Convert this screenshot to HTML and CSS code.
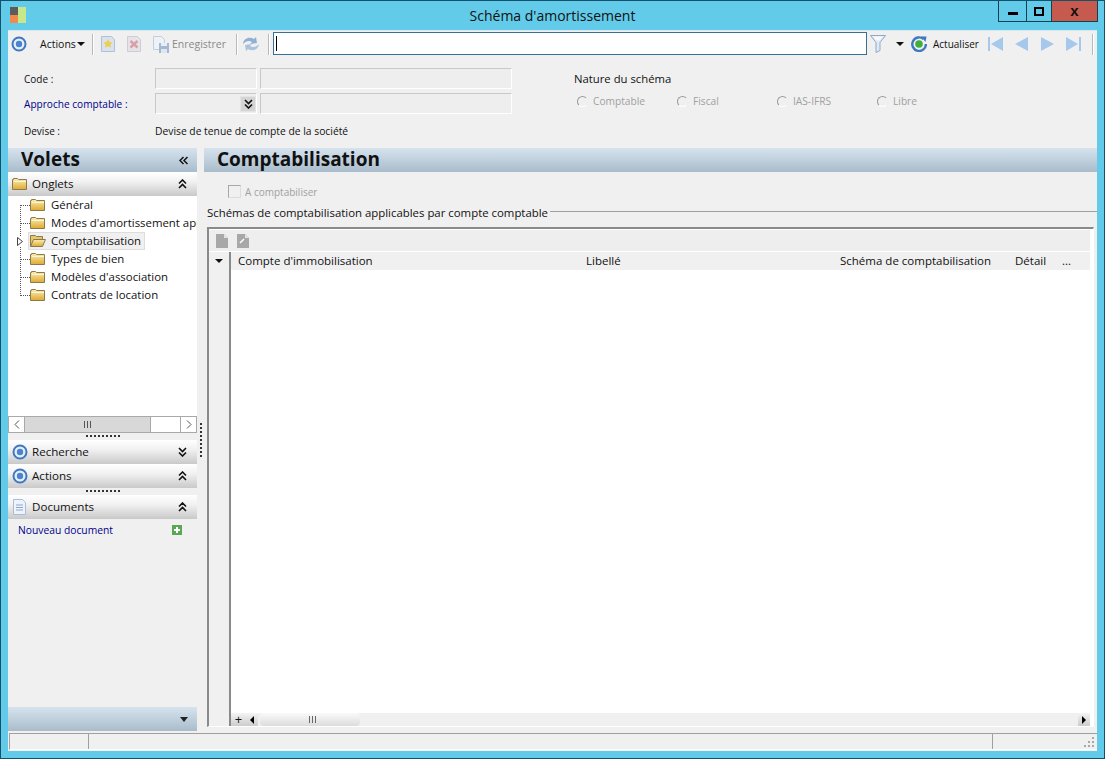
FILE: index.html
```html
<!DOCTYPE html>
<html>
<head>
    <title>Schéma d'amortissement</title>
    <link rel="stylesheet" href="styles.css">
</head>
<body>
<svg class="defs">
    <defs>
        <linearGradient id="foldergrad" x1="0" y1="0" x2="0" y2="1">
            <stop offset="0" stop-color="#fbeeb8"/>
            <stop offset="1" stop-color="#dfa92f"/>
        </linearGradient>
        <g id="target">
            <circle cx="8" cy="8" r="6.5" fill="#e6eef8" stroke="#3f78c0" stroke-width="2"/>
            <circle cx="8" cy="8" r="3.2" fill="#4a84d0"/>
        </g>
        <g id="folder">
            <path d="M1.500 3.500v-1h4l1 1h8v10h-14v-10z" fill="url(#foldergrad)" stroke="#8a7a50"/>
            <path d="M2 5h12v1h-12z" fill="#fff6d0"/>
        </g>
        <g id="folderopen">
            <path d="M0.500 13.500v-11h5l1 1h6v3" fill="#e6c76c" stroke="#8a7a50"/>
            <path d="M0.500 13.500l3-7h12l-3 7z" fill="url(#foldergrad)" stroke="#8a7a50"/>
        </g>
        <g id="chevup">
            <path d="M1 4.500l3.500-3.500 3.500 3.500M1 9l3.500-3.500 3.500 3.500" fill="none" stroke="#111" stroke-width="1.600"/>
        </g>
        <g id="chevdown">
            <path d="M1 1l3.500 3.500 3.500-3.500M1 5.500l3.500 3.500 3.500-3.500" fill="none" stroke="#111" stroke-width="1.600"/>
        </g>
    </defs>
</svg>

<div class="window">
    <div class="titlebar">
        <svg class="appicon" width="16" height="16" viewBox="0 0 16 16">
            <rect x="0" y="0" width="8" height="8" fill="#5c5c5c"/>
            <rect x="0" y="8" width="8" height="8" fill="#f08a4b"/>
            <rect x="8" y="0" width="8" height="16" fill="#c6e88a"/>
        </svg>
        <div class="title">Schéma d'amortissement</div>
        <div class="winbuttons">
            <div class="winbtn minbtn"><span class="minglyph"></span></div>
            <div class="winbtn maxbtn"><span class="maxglyph"></span></div>
            <div class="winbtn closebtn">x</div>
        </div>
    </div>

    <div class="client">
        <div class="toolbar">
            <svg class="tb-target" width="16" height="16" viewBox="0 0 16 16"><use href="#target"/></svg>
            <span class="tb-actions">Actions</span>
            <span class="caret"></span>
            <span class="sep sep-a"></span>
            <svg class="tb-new" width="14" height="16" viewBox="0 0 14 16">
                <path d="M0.500 0.500h10l3 3v12h-13z" fill="#d8e2f0" stroke="#b3bfd0"/>
                <path d="M7 3l1.500 3 3.200.4-2.300 2.200.6 3.200-3-1.500-3 1.500.6-3.200-2.300-2.200 3.200-.4z" fill="#ecd04a"/>
            </svg>
            <svg class="tb-del" width="14" height="16" viewBox="0 0 14 16">
                <path d="M0.500 0.500h10l3 3v12h-13z" fill="#e6e3e8" stroke="#cfccd2"/>
                <path d="M3.500 5l7 6.500M10.500 5l-7 6.500" stroke="#d9a0a6" stroke-width="2.400"/>
            </svg>
            <svg class="tb-save" width="16" height="17" viewBox="0 0 16 17">
                <path d="M0.500 0.500h8l3 3v10h-11z" fill="#eef2f7" stroke="#c2cedc"/>
                <rect x="6" y="7" width="10" height="10" fill="#a4b8d2"/>
                <rect x="8" y="7" width="6" height="3" fill="#e6edf5"/>
                <rect x="8" y="13" width="6" height="4" fill="#dfe6ef"/>
            </svg>
            <span class="tb-save-label">Enregistrer</span>
            <span class="sep sep-b"></span>
            <svg class="tb-refresh" width="16" height="16" viewBox="0 0 16 16">
                <path d="M0 8c0-5 6-8 11-5l2-2 1 6-7 1 2-2c-3-2-6-1-9 2z" fill="#8fb0d4"/>
                <path d="M16 8c0 5-6 8-11 5l-2 2-1-6 7-1-2 2c3 2 6 1 9-2z" fill="#a9c2de"/>
            </svg>
            <span class="sep sep-c"></span>
            <div class="searchbox"><span class="cursor"></span></div>
            <svg class="tb-filter" width="16" height="18" viewBox="0 0 16 18">
                <path d="M0.500 0.500h15l-5.500 7v8l-4 2v-10z" fill="#dfeaf5" stroke="#8fa9c6"/>
                <path d="M3 1.500h10l-3.500 4h-3z" fill="#f6fafd"/>
            </svg>
            <span class="caret caret-filter"></span>
            <svg class="tb-update" width="16" height="16" viewBox="0 0 16 16">
                <path d="M12.500 3a6.800 6.800 0 1 0 2.400 5" fill="none" stroke="#3f78c0" stroke-width="2.400"/>
                <path d="M10 0.500l5.500 0-1 5.500z" fill="#3f78c0"/>
                <circle cx="8" cy="8" r="3.800" fill="#3fae3a"/>
            </svg>
            <span class="tb-update-label">Actualiser</span>
            <svg class="nav nav-first" width="15" height="14" viewBox="0 0 15 14">
                <rect x="0" y="0" width="2" height="14" fill="#a5c8ec"/><path d="M15 0v14l-12-7z" fill="#a5c8ec"/>
            </svg>
            <svg class="nav nav-prev" width="13" height="14" viewBox="0 0 13 14"><path d="M13 0v14l-13-7z" fill="#a5c8ec"/></svg>
            <svg class="nav nav-next" width="13" height="14" viewBox="0 0 13 14"><path d="M0 0v14l13-7z" fill="#a5c8ec"/></svg>
            <svg class="nav nav-last" width="15" height="14" viewBox="0 0 15 14">
                <rect x="13" y="0" width="2" height="14" fill="#a5c8ec"/><path d="M0 0v14l12-7z" fill="#a5c8ec"/>
            </svg>
            <span class="sep sep-d"></span>
        </div>

        <div class="form">
            <div class="form-left">
                <div class="form-row">
                    <label class="form-label">Code :</label>
                    <div class="field field-short"></div>
                    <div class="field field-long"></div>
                </div>
                <div class="form-row">
                    <label class="form-label form-link">Approche comptable :</label>
                    <div class="field field-short">
                        <span class="combo-btn">
                            <svg width="9" height="10" viewBox="0 0 9 10"><use href="#chevdown"/></svg>
                        </span>
                    </div>
                    <div class="field field-long"></div>
                </div>
                <div class="form-row form-row-text">
                    <label class="form-label">Devise :</label>
                    <span>Devise de tenue de compte de la société</span>
                </div>
            </div>
            <div class="nature">
                <div class="nature-title">Nature du schéma</div>
                <div class="radios">
                    <div class="radio"><span class="radio-dot"></span>Comptable</div>
                    <div class="radio"><span class="radio-dot"></span>Fiscal</div>
                    <div class="radio"><span class="radio-dot"></span>IAS-IFRS</div>
                    <div class="radio"><span class="radio-dot"></span>Libre</div>
                </div>
            </div>
        </div>

        <div class="panes">
            <div class="sidebar">
                <div class="band band-blue">
                    <span class="band-title">Volets</span>
                    <svg class="chev-left" width="9" height="9" viewBox="0 0 9 9">
                        <path d="M4.500 1l-3.500 3.500 3.500 3.500M8.500 1l-3.500 3.500 3.500 3.500" fill="none" stroke="#111" stroke-width="1.500"/>
                    </svg>
                </div>
                <div class="band band-white">
                    <svg class="band-icon" width="16" height="16" viewBox="0 0 16 16"><use href="#folder"/></svg>
                    <span class="band-label">Onglets</span>
                    <svg class="chev" width="9" height="10" viewBox="0 0 9 10"><use href="#chevup"/></svg>
                </div>
                <div class="tree">
                    <div class="tree-row">
                        <span class="stub"></span>
                        <svg width="16" height="16" viewBox="0 0 16 16"><use href="#folder"/></svg>
                        <span class="tree-text">Général</span>
                    </div>
                    <div class="tree-row">
                        <span class="stub"></span>
                        <svg width="16" height="16" viewBox="0 0 16 16"><use href="#folder"/></svg>
                        <span class="tree-text">Modes d'amortissement applicables</span>
                    </div>
                    <div class="tree-row tree-selected">
                        <svg class="expander" width="6" height="9" viewBox="0 0 6 9">
                            <path d="M0.500 0.500l5 4-5 4z" fill="#fff" stroke="#444"/>
                        </svg>
                        <span class="sel-box">
                            <svg width="16" height="16" viewBox="0 0 16 16"><use href="#folderopen"/></svg>
                            <span class="tree-text">Comptabilisation</span>
                        </span>
                    </div>
                    <div class="tree-row">
                        <span class="stub"></span>
                        <svg width="16" height="16" viewBox="0 0 16 16"><use href="#folder"/></svg>
                        <span class="tree-text">Types de bien</span>
                    </div>
                    <div class="tree-row">
                        <span class="stub"></span>
                        <svg width="16" height="16" viewBox="0 0 16 16"><use href="#folder"/></svg>
                        <span class="tree-text">Modèles d'association</span>
                    </div>
                    <div class="tree-row">
                        <span class="stub"></span>
                        <svg width="16" height="16" viewBox="0 0 16 16"><use href="#folder"/></svg>
                        <span class="tree-text">Contrats de location</span>
                    </div>
                </div>
                <div class="hscroll">
                    <span class="hs-btn">
                        <svg width="6" height="9" viewBox="0 0 6 9"><path d="M5 0.500l-4 4 4 4" fill="none" stroke="#555"/></svg>
                    </span>
                    <span class="hs-thumb"><span class="hs-grip"></span></span>
                    <span class="hs-track"></span>
                    <span class="hs-btn">
                        <svg width="6" height="9" viewBox="0 0 6 9"><path d="M1 0.500l4 4-4 4" fill="none" stroke="#555"/></svg>
                    </span>
                </div>
                <div class="grip"><span></span></div>
                <div class="band band-white">
                    <svg class="band-icon" width="16" height="16" viewBox="0 0 16 16"><use href="#target"/></svg>
                    <span class="band-label">Recherche</span>
                    <svg class="chev" width="9" height="10" viewBox="0 0 9 10"><use href="#chevdown"/></svg>
                </div>
                <div class="band band-white">
                    <svg class="band-icon" width="16" height="16" viewBox="0 0 16 16"><use href="#target"/></svg>
                    <span class="band-label">Actions</span>
                    <svg class="chev" width="9" height="10" viewBox="0 0 9 10"><use href="#chevup"/></svg>
                </div>
                <div class="grip"><span></span></div>
                <div class="band band-white">
                    <svg class="band-icon band-icon-doc" width="14" height="16" viewBox="0 0 14 16">
                        <path d="M0.500 0.500h9l3 3v12h-12z" fill="#eef3fb" stroke="#a9bcd8"/>
                        <path d="M3 6h7M3 8.500h7M3 11h7" stroke="#8aa6cf"/>
                    </svg>
                    <span class="band-label band-label-doc">Documents</span>
                    <svg class="chev" width="9" height="10" viewBox="0 0 9 10"><use href="#chevup"/></svg>
                </div>
                <div class="doc-row">
                    <span class="form-link">Nouveau document</span>
                    <svg width="10" height="10" viewBox="0 0 10 10">
                        <rect width="10" height="10" fill="#5aa856"/>
                        <path d="M5 2v6M2 5h6" stroke="#fff" stroke-width="2"/>
                    </svg>
                </div>
                <div class="spacer"></div>
                <div class="band band-blue band-bottom">
                    <span class="caret caret-bottom"></span>
                </div>
            </div>

            <div class="splitter"><span></span></div>

            <div class="main">
                <div class="band band-blue band-main">
                    <span class="band-title">Comptabilisation</span>
                </div>
                <div class="check-row">
                    <span class="checkbox"></span>A comptabiliser
                </div>
                <div class="group-title">
                    <span>Schémas de comptabilisation applicables par compte comptable</span>
                    <span class="group-line"></span>
                </div>
                <div class="gridbox">
                    <div class="grid-tools">
                        <svg width="12" height="14" viewBox="0 0 12 14"><path d="M0 0h8l4 4v10h-12z" fill="#a8a8a8"/><path d="M8 0l4 4h-4z" fill="#e4e4e4"/></svg>
                        <svg width="12" height="14" viewBox="0 0 12 14"><path d="M0 0h8l4 4v10h-12z" fill="#a8a8a8"/><path d="M8 0l4 4h-4z" fill="#e4e4e4"/><path d="M3 9l4-4" stroke="#fff" stroke-width="1.500"/></svg>
                    </div>
                    <div class="grid-body">
                        <div class="grid-rowhead">
                            <span class="caret caret-grid"></span>
                        </div>
                        <div class="grid-table">
                            <div class="grid-head">
                                <span>Compte d'immobilisation</span>
                                <span>Libellé</span>
                                <span>Schéma de comptabilisation</span>
                                <span>Détail</span>
                                <span>...</span>
                            </div>
                            <div class="grid-rows"></div>
                            <div class="grid-scroll">
                                <span class="gs-plus">+</span>
                                <span class="gs-btn"><span class="tri-left"></span></span>
                                <span class="gs-thumb"><span class="gs-grip"></span></span>
                                <span class="gs-track"></span>
                                <span class="gs-btn"><span class="tri-right"></span></span>
                            </div>
                        </div>
                    </div>
                </div>
            </div>
        </div>

        <div class="statusbar">
            <div class="status-cell status-a"></div>
            <div class="status-cell status-b"></div>
            <div class="status-cell status-c">
                <svg class="resize-grip" width="12" height="12" viewBox="0 0 12 12">
                    <path d="M9 1h2v2h-2zM5 5h2v2h-2zM9 5h2v2h-2zM1 9h2v2h-2zM5 9h2v2h-2zM9 9h2v2h-2z" fill="#a8a8a8"/>
                </svg>
            </div>
        </div>
    </div>
</div>
</body>
</html>
```

FILE: styles.css
```css
* {
    box-sizing: border-box;
}

html, body {
    margin: 0;
    padding: 0;
}

body {
    font-family: "Open Sans", "Noto Sans", sans-serif;
    font-size: 10.300px;
    color: #111;
    background-color: #62cbe9;
    overflow: hidden;
}

.defs {
    position: absolute;
    width: 0;
    height: 0;
}

.window {
    width: 1105px;
    height: 759px;
    display: flex;
    flex-direction: column;
    padding: 0 7px 7px 7px;
    background-color: #62cbe9;
    border: 1px solid #17506a;
}

/* title bar */
.titlebar {
    height: 29px;
    flex: none;
    display: flex;
    align-items: flex-start;
    position: relative;
    margin-left: -7px;
    margin-right: -7px;
}

.appicon {
    margin: 6px 0 0 9px;
}

.title {
    position: absolute;
    left: 0;
    right: 0;
    top: 5px;
    text-align: center;
    font-size: 14px;
    line-height: 20px;
    color: #111;
}

.winbuttons {
    display: flex;
    margin-left: auto;
    position: relative;
    margin-right: 6px;
    height: 21px;
    border: 1px solid #17404f;
    border-top: none;
}

.winbtn {
    height: 20px;
    display: flex;
    align-items: center;
    justify-content: center;
}

.minbtn {
    width: 28px;
    border-right: 1px solid #17404f;
}

.minglyph {
    width: 10px;
    height: 3px;
    margin-top: 5px;
    background-color: #000;
}

.maxbtn {
    width: 25px;
    border-right: 1px solid #17404f;
}

.maxglyph {
    width: 10px;
    height: 9px;
    border: 2px solid #000;
}

.closebtn {
    width: 45px;
    background-color: #c75a4e;
    font-family: "Liberation Sans", sans-serif;
    font-weight: bold;
    font-size: 15px;
    line-height: 16px;
}

/* client area */
.client {
    flex: 1;
    display: flex;
    flex-direction: column;
    min-height: 0;
    background-color: #f0f0f0;
    border-top: 1px solid #d9e8ee;
}

.toolbar {
    height: 26px;
    flex: none;
    display: flex;
    align-items: center;
    padding-left: 3px;
}

.tb-actions {
    margin-left: 13px;
    width: 35px;
    font-size: 10.500px;
}

.caret {
    width: 0;
    height: 0;
    border-left: 4px solid transparent;
    border-right: 4px solid transparent;
    border-top: 4px solid #111;
    display: inline-block;
}

.tb-actions + .caret {
    margin-left: 2px;
}

.sep {
    width: 2px;
    height: 21px;
    background-color: #b9b9b9;
    border-right: 1px solid #fff;
}

.sep-a {
    margin-left: 7px;
}

.tb-new {
    margin-left: 7px;
}

.tb-del {
    margin-left: 12px;
}

.tb-save {
    margin-left: 12px;
}

.tb-save-label {
    margin-left: 3px;
    width: 56px;
    font-size: 10.500px;
    color: #8a8a8a;
}

.sep-b {
    margin-left: 8px;
}

.tb-refresh {
    margin-left: 5px;
}

.sep-c {
    margin-left: 9px;
}

.searchbox {
    flex: 1;
    height: 23px;
    margin: 0 0 1px 3px;
    background-color: #fff;
    border: 1px solid #3a6f96;
    display: flex;
    align-items: center;
    padding-left: 2px;
}

.cursor {
    width: 1px;
    height: 15px;
    background-color: #000;
}

.tb-filter {
    margin-left: 3px;
}

.caret-filter {
    margin-left: 10px;
}

.tb-update {
    margin-left: 7px;
}

.tb-update-label {
    margin-left: 6px;
    width: 46px;
    font-size: 10px;
}

.nav-first {
    margin-left: 9px;
}

.nav-prev {
    margin-left: 12px;
}

.nav-next {
    margin-left: 13px;
}

.nav-last {
    margin-left: 12px;
}

.sep-d {
    margin-left: 11px;
    margin-right: 3px;
}

/* form */
.form {
    height: 91px;
    flex: none;
    display: flex;
    padding: 11px 0 0 16px;
}

.form-left {
    width: 550px;
}

.form-row {
    display: flex;
    align-items: center;
    height: 21px;
    margin-bottom: 4px;
}

.form-row-text {
    margin-top: 6px;
}

.form-label {
    width: 131px;
    font-size: 10px;
}

.form-link {
    color: #00008b;
    font-size: 10.300px;
}

.form-label.form-link {
    font-size: 10.100px;
}

.field {
    height: 21px;
    background-color: #eee;
    border: 1px solid #c8c8c8;
    border-right-color: #fff;
    border-bottom-color: #fff;
    position: relative;
    display: flex;
    justify-content: flex-end;
    align-items: center;
}

.field-short {
    width: 102px;
    margin-right: 3px;
}

.field-long {
    width: 252px;
}

.combo-btn {
    width: 16px;
    height: 16px;
    background-color: #d4d4d4;
    border: 1px solid #e4e4e4;
    display: flex;
    align-items: center;
    justify-content: center;
}

.nature {
    padding-top: 3px;
}

.nature-title {
    font-size: 11.300px;
    line-height: 16px;
}

.radios {
    display: flex;
    margin-top: 7px;
    margin-left: 3px;
}

.radio {
    width: 100px;
    display: flex;
    align-items: center;
    color: #a0a0a0;
    font-size: 10.200px;
}

.radio-dot {
    width: 11px;
    height: 11px;
    margin-right: 5px;
    border-radius: 50%;
    border: 1px solid #999;
    border-right-color: #eee;
    border-bottom-color: #fff;
}

/* panes */
.panes {
    flex: 1;
    display: flex;
    min-height: 0;
}

.sidebar {
    width: 189px;
    flex: none;
    display: flex;
    flex-direction: column;
}

.band {
    flex: none;
    height: 24px;
    display: flex;
    align-items: center;
}

.band-blue {
    background: linear-gradient(#d6e3ee, #a9bccb);
}

.band-title {
    font-weight: 700;
    font-size: 19px;
    margin: 0 0 2px 13px;
}

.chev-left {
    margin-left: auto;
    margin-right: 9px;
}

.band-white {
    background: linear-gradient(#fff, #f1f1f1 40%, #c9c9c9);
    padding-left: 4px;
}

.band-icon {
    flex: none;
}

.band-icon-doc {
    margin-left: 1px;
}

.band-label {
    margin: 0 0 2px 4px;
    font-size: 11.600px;
    flex: 1;
}

.band-label-doc {
    margin-left: 5px;
}

.chev {
    margin-right: 10px;
}

.tree {
    flex: none;
    height: 220px;
    background-color: #fff;
    overflow: hidden;
    background-image: repeating-linear-gradient(#555 0, #555 1px, transparent 1px, transparent 2px);
    background-repeat: no-repeat;
    background-position: 12px 9px;
    background-size: 1px 91px;
    white-space: nowrap;
}

.tree-row {
    height: 18px;
    display: flex;
    align-items: center;
    font-size: 11.400px;
}

.stub {
    width: 10px;
    margin-left: 12px;
    border-top: 1px dotted #555;
    flex: none;
}

.tree-row svg {
    flex: none;
}

.tree-text {
    margin: 0 0 2px 5px;
}

.tree-row .expander {
    margin-left: 9px;
    background-color: #fff;
}

.sel-box {
    height: 18px;
    margin-left: 5px;
    padding: 0 3px 0 1px;
    display: flex;
    align-items: center;
    background-color: #f0f0f0;
    border: 1px solid #ddd;
}

.hscroll {
    flex: none;
    height: 17px;
    display: flex;
    background-color: #f8f8f8;
    border: 1px solid #a9a9a9;
}

.hs-btn {
    width: 16px;
    flex: none;
    background-color: #fff;
    display: flex;
    align-items: center;
    justify-content: center;
    border-right: 1px solid #a9a9a9;
}

.hs-btn:last-child {
    border-right: none;
    border-left: 1px solid #a9a9a9;
}

.hs-thumb {
    width: 126px;
    flex: none;
    background-color: #d8d8d8;
    border-right: 1px solid #a9a9a9;
    display: flex;
    align-items: center;
    justify-content: center;
}

.hs-grip {
    width: 7px;
    height: 7px;
    background-image: linear-gradient(90deg, #555 1px, transparent 1px);
    background-size: 3px 7px;
}

.hs-track {
    flex: 1;
    background-color: #fff;
}

.grip {
    flex: none;
    height: 7px;
    display: flex;
    justify-content: center;
    align-items: flex-start;
}

.grip span {
    width: 34px;
    height: 2px;
    margin-top: 2px;
    background-image: linear-gradient(90deg, #333 2px, transparent 2px);
    background-size: 4px 2px;
}

.doc-row {
    flex: none;
    height: 21px;
    display: flex;
    align-items: center;
    justify-content: space-between;
    padding: 0 15px 0 10px;
}

.spacer {
    flex: 1;
}

.band-bottom {
    justify-content: flex-end;
    padding-right: 9px;
}

.caret-bottom {
    border-width: 5px 4px 0;
    border-top-color: #222;
}

.splitter {
    width: 7px;
    flex: none;
    display: flex;
    align-items: flex-start;
    justify-content: center;
}

.splitter span {
    width: 2px;
    height: 36px;
    margin-top: 275px;
    background-image: linear-gradient(#333 2px, transparent 2px);
    background-size: 2px 4px;
}

.main {
    flex: 1;
    min-width: 0;
    display: flex;
    flex-direction: column;
}

.check-row {
    height: 19px;
    margin-top: 10px;
    display: flex;
    align-items: center;
    padding-left: 24px;
    color: #a0a0a0;
    font-size: 10px;
}

.checkbox {
    width: 13px;
    height: 13px;
    margin-right: 4px;
    border: 1px solid #a8a8a8;
    border-right-color: #ddd;
    border-bottom-color: #ddd;
    background-color: #f0f0f0;
}

.group-title {
    display: flex;
    align-items: center;
    padding-left: 3px;
    height: 16px;
    margin-top: 3px;
    font-size: 11.400px;
}

.group-line {
    flex: 1;
    height: 1px;
    margin-left: 2px;
    margin-top: -2px;
    background-color: #a0a0a0;
}

.gridbox {
    flex: 1;
    min-height: 0;
    margin: 7px 3px 4px;
    border: 2px solid #8a8a8a;
    border-right: 1px solid #fff;
    border-bottom: 1px solid #fff;
    display: flex;
    flex-direction: column;
    background-color: #fff;
    padding: 0 3px 0 0;
}

.grid-tools {
    flex: none;
    height: 23px;
    display: flex;
    align-items: center;
    gap: 9px;
    padding-left: 7px;
    background-color: #eee;
    border-top: 1px solid #fff;
    border-bottom: 1px solid #fff;
}

.grid-body {
    flex: 1;
    min-height: 0;
    display: flex;
}

.grid-rowhead {
    width: 22px;
    flex: none;
    background-color: #f0f0f0;
    border-right: 2px solid #8a8a8a;
    padding-top: 7px;
    padding-left: 6px;
}

.caret-grid {
    display: block;
}

.grid-table {
    flex: 1;
    min-width: 0;
    display: flex;
    flex-direction: column;
}

.grid-head {
    flex: none;
    height: 18px;
    display: grid;
    grid-template-columns: 348px 254px 175px 47px 1fr;
    align-items: center;
    padding: 0 0 2px 7px;
    background-color: #f0f0f0;
    font-size: 11.500px;
}

.grid-rows {
    flex: 1;
    background-color: #fff;
}

.grid-scroll {
    flex: none;
    height: 13px;
    display: flex;
    background-color: #f0f0f0;
    align-items: stretch;
}

.gs-plus {
    width: 15px;
    flex: none;
    text-align: center;
    line-height: 12px;
    background: linear-gradient(#f4f4f4, #ccc);
    font-size: 13px;
}

.gs-btn {
    width: 12px;
    flex: none;
    background: linear-gradient(#f4f4f4, #ccc);
    display: flex;
    align-items: center;
    justify-content: center;
}

.tri-left {
    width: 0;
    height: 0;
    border-top: 4px solid transparent;
    border-bottom: 4px solid transparent;
    border-right: 4px solid #000;
}

.tri-right {
    width: 0;
    height: 0;
    border-top: 4px solid transparent;
    border-bottom: 4px solid transparent;
    border-left: 4px solid #000;
}

.gs-thumb {
    width: 100px;
    flex: none;
    margin-left: 2px;
    border-radius: 4px;
    background: linear-gradient(#fafafa, #dcdcdc);
    display: flex;
    align-items: center;
    justify-content: center;
    padding-left: 4px;
}

.gs-grip {
    width: 7px;
    height: 7px;
    background-image: linear-gradient(90deg, #666 1px, transparent 1px);
    background-size: 3px 7px;
}

.gs-track {
    flex: 1;
}

/* status bar */
.statusbar {
    flex: none;
    height: 17px;
    margin: 2px 0 1px 1px;
    display: flex;
    border-top: 1px solid #a0a0a0;
    border-left: 1px solid #a0a0a0;
    border-bottom: 1px solid #fff;
}

.status-cell {
    border-right: 1px solid #a0a0a0;
}

.status-a {
    width: 79px;
}

.status-b {
    flex: 1;
}

.status-c {
    width: 104px;
    border-right: none;
    display: flex;
    justify-content: flex-end;
    align-items: flex-end;
}

.resize-grip {
    margin: 0 2px 1px 0;
}
```
